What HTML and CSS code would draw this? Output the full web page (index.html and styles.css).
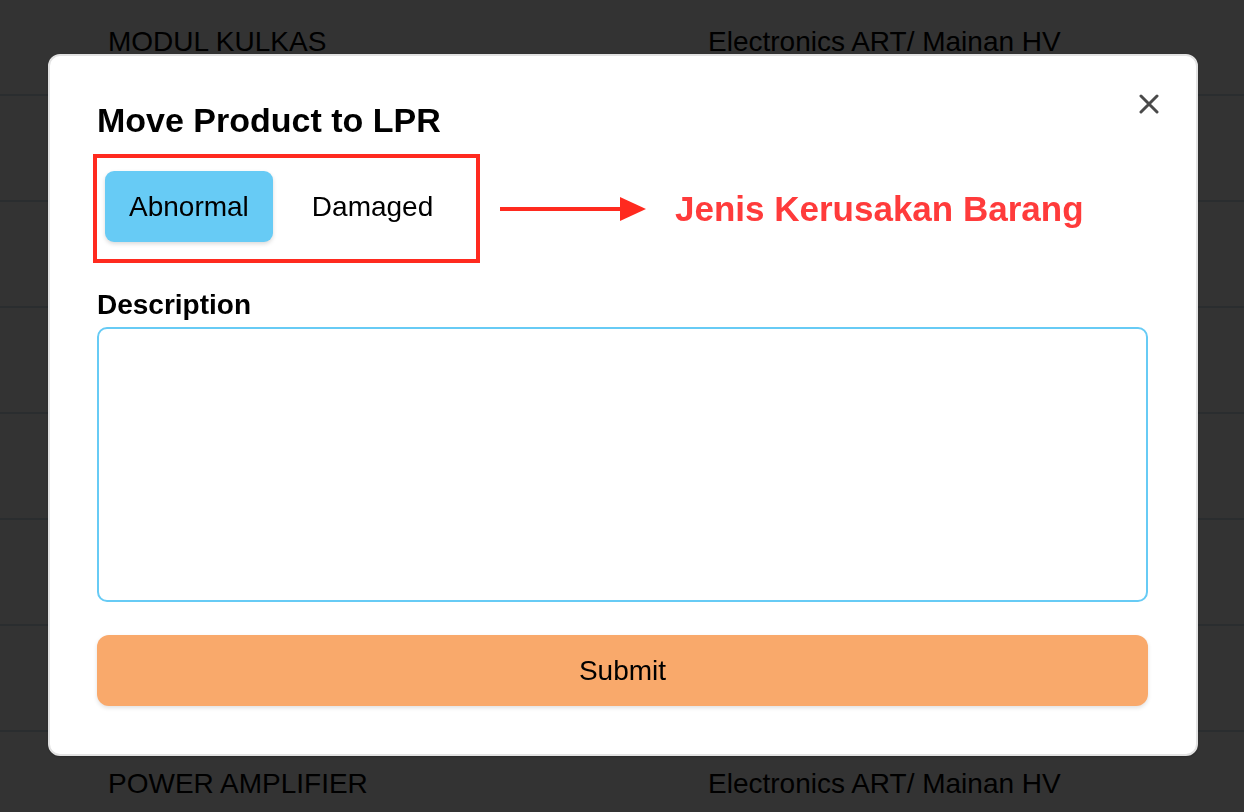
FILE: index.html
```html
<!DOCTYPE html>
<html>
<head>
<meta charset="utf-8">
<link rel="stylesheet" href="styles.css">
</head>
<body>
<div class="table">
  <div class="row"><span class="c1">MODUL KULKAS</span><span class="c2">Electronics ART/ Mainan HV</span></div>
  <div class="row"><span class="c1"></span><span class="c2"></span></div>
  <div class="row"><span class="c1"></span><span class="c2"></span></div>
  <div class="row"><span class="c1"></span><span class="c2"></span></div>
  <div class="row"><span class="c1"></span><span class="c2"></span></div>
  <div class="row"><span class="c1"></span><span class="c2"></span></div>
  <div class="row"><span class="c1"></span><span class="c2"></span></div>
  <div class="row"><span class="c1">POWER AMPLIFIER</span><span class="c2">Electronics ART/ Mainan HV</span></div>
</div>

<div class="modal">
  <button class="close" aria-label="Close">
    <svg width="20" height="20" viewBox="0 0 20 20"><path d="M2 2 L18 18 M18 2 L2 18" stroke="#4a4a4a" stroke-width="3" stroke-linecap="round" fill="none"/></svg>
  </button>
  <h1 class="title">Move Product to LPR</h1>
  <div class="type-row">
    <div class="highlight">
      <div class="seg">
        <button class="seg-btn active">Abnormal</button>
        <button class="seg-btn">Damaged</button>
      </div>
    </div>
    <svg class="arrow" width="146" height="30" viewBox="0 0 146 30"><rect x="0" y="13" width="124" height="4" fill="#ff2a1f"/><polygon points="120,3 146,15 120,27" fill="#ff2a1f"/></svg>
    <span class="note">Jenis Kerusakan Barang</span>
  </div>
  <label class="label">Description</label>
  <textarea class="desc"></textarea>
  <button class="submit">Submit</button>
</div>
</body>
</html>
```

FILE: styles.css
```css
* { box-sizing: border-box; }
html, body { margin: 0; padding: 0; }
body {
  width: 1244px;
  height: 812px;
  overflow: hidden;
  background: #333333;
  font-family: "Liberation Sans", Arial, sans-serif;
  color: #000;
}
.table { margin-top: -10px; }
.row {
  height: 106px;
  border-bottom: 2px solid #2a2d2f;
  display: flex;
  align-items: center;
  padding-left: 108px;
  font-size: 28px;
  color: #000;
}
.c1 { width: 600px; }

.modal {
  position: fixed;
  top: 54px;
  left: 48px;
  width: 1150px;
  height: 702px;
  background: #fff;
  border: 2px solid #e2e2e2;
  border-radius: 12px;
  box-shadow: 0 1px 2px rgba(0,0,0,0.2);
  padding: 44px 48px 48px 47px;
  display: flex;
  flex-direction: column;
}
.close {
  position: absolute;
  top: 37px;
  right: 36px;
  width: 22px;
  height: 22px;
  padding: 1px;
  border: 0;
  background: transparent;
  display: flex;
  align-items: center;
  justify-content: center;
}
.title {
  margin: 0 0 14px;
  font-size: 34px;
  line-height: 40px;
  font-weight: bold;
  height: 40px;
}
.type-row {
  display: flex;
  align-items: center;
  margin-left: -4px;
}
.highlight {
  border: 4px solid #ff2a1f;
  padding: 13px 17px 17px 8px;
  width: 387px;
}
.seg { display: flex; gap: 15px; }
.seg-btn {
  height: 71px;
  padding: 0 24px;
  border: 0;
  border-radius: 9px;
  background: transparent;
  font-family: "Liberation Sans", Arial, sans-serif;
  font-size: 28px;
  color: #000;
}
.seg-btn.active {
  background: #67cbf5;
  box-shadow: 0 2px 4px rgba(0,0,0,0.15);
}
.arrow { margin-left: 20px; flex: none; }
.note {
  margin-left: 29px;
  font-size: 35px;
  font-weight: bold;
  color: #ff3b3b;
}
.label {
  margin-top: 26px;
  font-size: 28px;
  line-height: 32px;
  font-weight: bold;
}
.desc {
  margin-top: 6px;
  height: 275px;
  width: 100%;
  border: 2px solid #67cbf5;
  border-radius: 10px;
  resize: none;
  outline: none;
}
.submit {
  margin-top: 33px;
  height: 71px;
  width: 100%;
  border: 0;
  border-radius: 12px;
  background: #f9a96b;
  font-family: "Liberation Sans", Arial, sans-serif;
  font-size: 28px;
  color: #000;
  box-shadow: 0 2px 4px rgba(0,0,0,0.12);
}
```
